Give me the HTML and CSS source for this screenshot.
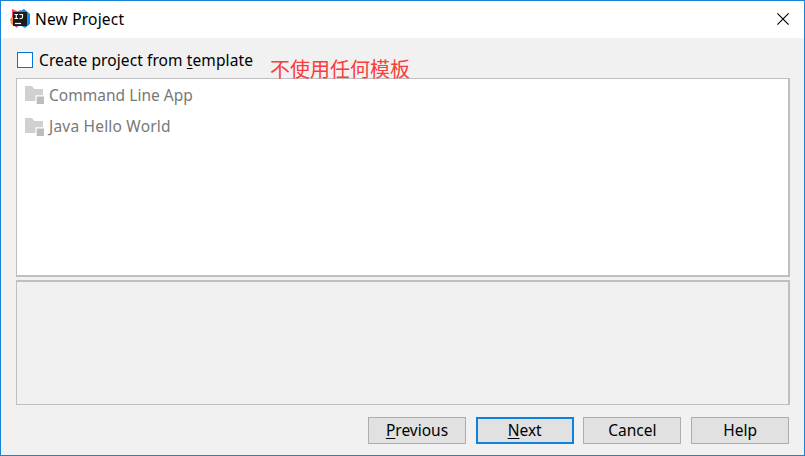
FILE: index.html
```html
<!DOCTYPE html>
<html lang="en">
<head>
<meta charset="utf-8">
<title>New Project</title>
<link rel="stylesheet" href="styles.css">
</head>
<body>
<div class="window">
  <header class="titlebar">
    <svg class="logo" width="20" height="20" viewBox="0 0 20 20">
      <path d="M2 0 9 3 8 10 1 11 2 7z" fill="#f5405f"/>
      <path d="M0 10 5 7 8 17 6 18 1 15z" fill="#f9913c"/>
      <path d="M10 2 14 0 20 5 20 15 15 19 10 16z" fill="#1489f0"/>
      <path d="M3 15.5 9 16 7 19z" fill="#c65ac0"/>
      <path d="M8 2 11 1 13 4H8z" fill="#b060c8"/>
      <rect x="3" y="3" width="14" height="14" fill="#1c1c1c"/>
      <path d="M4.5 5.5h3.6M6.3 5v5M4.5 9.5h3.6M9.5 5.5H13M12.5 5v3q0 1.5-1.5 1.5H9.5" fill="none" stroke="#fff" stroke-width="1.1"/>
      <path d="M5 14.5h6" stroke="#fff" stroke-width="1.2"/>
    </svg>
    <h1 class="title">New Project</h1>
    <svg class="close" width="12" height="12" viewBox="0 0 12 12"><path d="M.4.4l11.2 11.2M11.6.4.4 11.6" stroke="#000" stroke-width="1.15"/></svg>
  </header>
  <main class="content">
    <label class="option">
      <span class="checkbox"></span>
      <span class="option-text">Create project from <u>t</u>emplate</span>
      <span class="note">不使用任何模板</span>
    </label>
    <ul class="templates">
      <li class="template">
        <svg class="folder" width="20" height="19" viewBox="0 0 20 19"><path d="M0 0h7l2 3h9v6.3h-7.5V15H0z" fill="#d0d0d0"/><path d="M11.7 10.5H19V18h-7.3z" fill="#bdbdbd"/></svg>
        <span class="template-name">Command Line App</span>
      </li>
      <li class="template">
        <svg class="folder" width="20" height="19" viewBox="0 0 20 19"><path d="M0 0h7l2 3h9v6.3h-7.5V15H0z" fill="#d0d0d0"/><path d="M11.7 10.5H19V18h-7.3z" fill="#bdbdbd"/></svg>
        <span class="template-name wide">Java Hello World</span>
      </li>
    </ul>
    <section class="description"></section>
    <footer class="buttons">
      <button class="button"><u>P</u>revious</button>
      <button class="button primary"><u>N</u>ext</button>
      <button class="button">Cancel</button>
      <button class="button">Help</button>
    </footer>
  </main>
</div>
</body>
</html>
```
FILE: styles.css
```css
* { box-sizing: border-box; }
body {
  margin: 0;
  font: 15.5px/22px "Noto Sans", "Noto Sans CJK SC", sans-serif;
  color: #000;
}
u { text-underline-offset: 2px; text-decoration-thickness: 1px; text-decoration-skip-ink: none; }
.window {
  width: 805px;
  height: 456px;
  border: 1px solid #1883d7;
  background: #f1f1f1;
  display: flex;
  flex-direction: column;
}
.titlebar {
  height: 37px;
  flex: none;
  display: flex;
  align-items: center;
  padding: 0 15px 0 9px;
  background: #fff;
}
.logo { margin: 0 5px 1px 0; }
.title { margin: 0; padding-bottom: 1px; font-size: 15.5px; font-weight: 400; letter-spacing: .2px; }
.close { margin: 0 0 1px auto; }
.content { flex: 1; display: flex; flex-direction: column; padding: 0 15px; }
.option { height: 40px; flex: none; display: flex; align-items: center; padding: 3px 0 0 1px; white-space: nowrap; }
.checkbox { width: 16px; height: 16px; margin-right: 6px; border: 1px solid #0078d7; background: #fff; }
.option-text { width: 231px; letter-spacing: .1px; }
.note { position: relative; top: 9px; font: 400 20px/24px "Noto Sans CJK SC", sans-serif; color: #fb3c3c; }
.templates {
  width: 774px;
  height: 199px;
  margin: 0 0 3px;
  padding: 1px 0 0 8px;
  list-style: none;
  border: 1px solid #bfbfbf;
  border-width: 1px 2px 2px 1px;
  background: #fff;
  color: #787878;
}
.template { height: 31px; display: flex; align-items: center; }
.template + .template .folder { margin-top: 2px; }
.template-name { padding-bottom: 2px; letter-spacing: .03px; }
.wide { letter-spacing: .2px; }
.folder { margin-right: 4px; }
.description { width: 774px; height: 125px; border: 1px solid #bfbfbf; border-width: 2px 2px 1px 1px; }
.buttons { display: flex; justify-content: flex-end; gap: 9.8px; margin-top: 12px; }
.button {
  width: 97.9px;
  height: 27px;
  padding: 0 0 1px;
  border: 1px solid #adadad;
  background: #e1e1e1;
  font: 15.5px/22px "Noto Sans", sans-serif;
  color: #000;
}
.primary { border: 2px solid #0a84de; }
```
